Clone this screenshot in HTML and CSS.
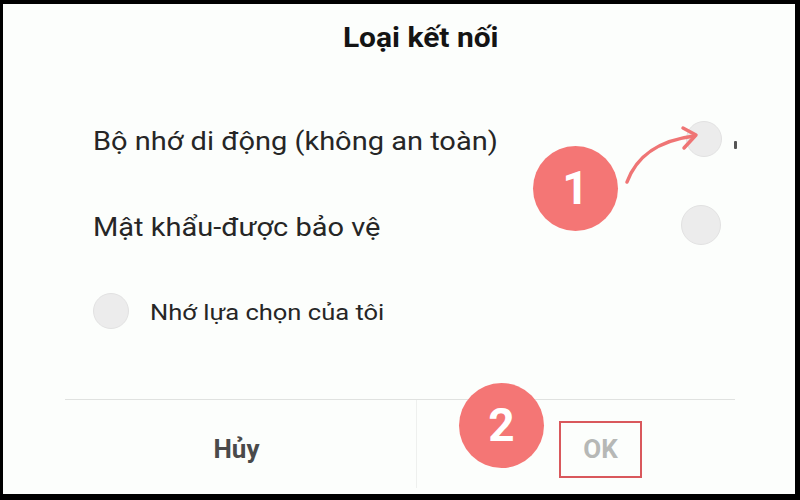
FILE: index.html
```html
<!DOCTYPE html>
<html lang="vi">
<head>
    <meta charset="UTF-8">
    <title>Loại kết nối</title>
    <link rel="stylesheet" href="styles.css">
</head>
<body>
    <div class="dialog">
        <h1 class="title"><span class="title-text">Loại kết nối</span></h1>

        <ul class="options">
            <li class="option">
                <span class="label"><span class="stretch">Bộ nhớ di động (không an toàn)</span></span>
                <span class="radio radio-one"></span>
                <span class="edge-mark"></span>
            </li>
            <li class="option">
                <span class="label"><span class="stretch">Mật khẩu-được bảo vệ</span></span>
                <span class="radio radio-two"></span>
            </li>
            <li class="option option-remember">
                <span class="radio radio-small"></span>
                <span class="label label-small"><span class="stretch">Nhớ lựa chọn của tôi</span></span>
            </li>
        </ul>

        <div class="actions">
            <div class="btn btn-cancel">Hủy</div>
            <div class="btn btn-ok"><span class="ok-box">OK</span></div>
        </div>

        <!-- chú thích hướng dẫn -->
        <div class="badge badge-one">1</div>
        <div class="badge badge-two">2</div>
        <svg class="arrow" width="120" height="80" viewBox="600 120 120 80">
            <path d="M627 182 C 636 158, 655 141, 694 136" fill="none" stroke="#ef7575" stroke-width="3.5" stroke-linecap="round"/>
            <path d="M683 128 L 696 135 L 684 148" fill="none" stroke="#ef7575" stroke-width="3.5" stroke-linecap="round" stroke-linejoin="round"/>
        </svg>
    </div>
</body>
</html>
```

FILE: styles.css
```css
* { margin: 0; padding: 0; box-sizing: border-box; }

html, body { width: 800px; height: 500px; background: #000; overflow: hidden; }

body { padding: 4px 5px 6px 3px; font-family: Roboto, "Noto Sans", sans-serif; }

/* khung hộp thoại */
.dialog {
    position: relative;
    height: 490px; background: #fcfefc;
    display: flex; flex-direction: column;
}

.title {
    margin-top: 15px; height: 38px; line-height: 38px;
    text-align: center; font-size: 28px; font-weight: bold; color: #141414;
    padding-left: 44px;
}
.title-text { display: inline-block; transform: scaleX(1.07); }

/* danh sách lựa chọn */
.options { list-style: none; margin-top: 41px; }
.option {
    display: flex; align-items: center; height: 86px;
    padding-left: 90px;
}
.label { font-size: 25px; color: #262626; flex: 1; }
/* ảnh chụp bị giãn ngang một chút */
.stretch { display: inline-block; transform: scaleX(1.16); transform-origin: left center; }
.label-small { font-size: 22px; flex: none; margin-left: 21px; }
.option-remember { height: 84px; }

.radio {
    display: block; width: 36px; height: 36px; border-radius: 50%;
    background: #ececec; border: 1px solid #e2e2e2;
}
.radio-one { margin-right: 73px; margin-top: -4px; }
.radio-two { width: 40px; height: 40px; margin-right: 74px; margin-top: -4px; }
.radio-small { width: 36px; height: 36px; margin-top: -2px; }

.edge-mark {
    position: absolute; left: 731px; top: 137px;
    width: 3px; height: 8px; background: #555; border-radius: 1px;
}

/* nút bấm */
.actions {
    margin: auto 60px 6px 62px;
    display: flex; border-top: 1px solid #e0e2e0;
    height: 89px;
}
.btn { display: flex; align-items: center; font-size: 26px; font-weight: bold; padding-top: 10px; }
.btn-cancel {
    width: 352px; justify-content: center; padding-right: 8px; color: #4a4a4a;
    border-right: 1px solid #eef0ee;
}
.btn-ok { flex: 1; padding-left: 142px; color: #b6b8b6; }
.ok-box {
    display: block; width: 83px; height: 57px; line-height: 53px; text-align: center;
    border: 2px solid #d9585c;
}

/* chú thích */
.badge {
    position: absolute; width: 85px; height: 85px; border-radius: 50%;
    background: #f47675; color: #fff;
    font-size: 46px; font-weight: bold; text-align: center; line-height: 85px;
}
.badge-one { left: 530px; top: 142px; }
.badge-two { left: 456px; top: 379px; }

.arrow { position: absolute; left: 597px; top: 116px; }
```
